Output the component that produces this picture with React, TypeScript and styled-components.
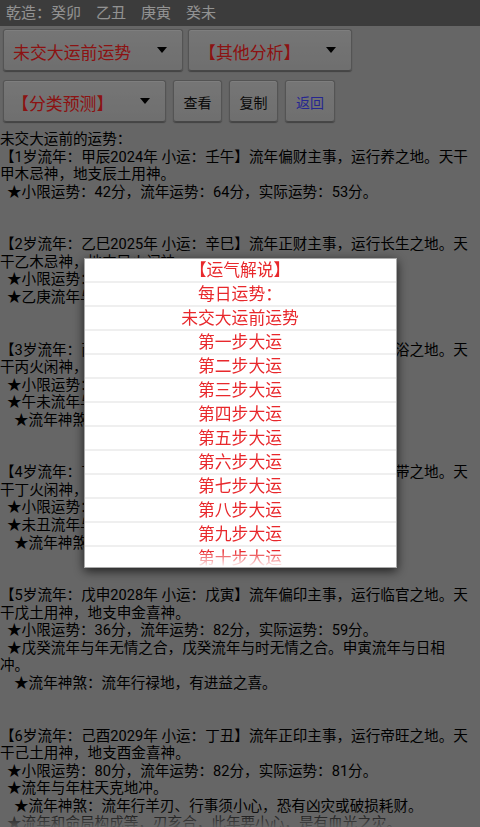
import React from 'react';
import styled, { createGlobalStyle } from 'styled-components';

const GlobalStyle = createGlobalStyle`
  html, body {
    margin: 0;
    padding: 0;
    background: #aaaaaa;
    overflow: hidden;
  }
  body {
    font-family: Roboto, 'Noto Sans CJK SC', sans-serif;
  }
`;

const Screen = styled.div`
  width: 480px;
  height: 827px;
  overflow: hidden;
  position: relative;
  background: #aaaaaa;
`;

const TopBar = styled.div`
  height: 26px;
  line-height: 27px;
  padding-left: 6px;
  background: #646464;
  color: #f4f4f4;
  font-size: 15px;
  white-space: pre;
`;

const ControlRow = styled.div<{ $gap: number; $top: number }>`
  display: flex;
  align-items: center;
  gap: ${p => p.$gap}px;
  padding-left: 3px;
  margin-top: ${p => p.$top}px;
`;

const RaisedBox = styled.div<{ $w: number }>`
  box-sizing: border-box;
  width: ${p => p.$w}px;
  height: 42px;
  border: 1px solid #8c8c8c;
  border-bottom-color: #777;
  border-radius: 3px;
  background: linear-gradient(#c4c4c4, #b9b9b9);
  box-shadow: 0 1px 1px rgba(0, 0, 0, 0.35), inset 0 1px 0 #d2d2d2;
`;

const Spinner = styled(RaisedBox)<{ $pad: number }>`
  display: flex;
  align-items: center;
  justify-content: space-between;
  padding: 2px 15px 0 ${p => p.$pad}px;
  color: #e82020;
  font-size: 16.9px;
  white-space: nowrap;
`;

const Arrow = styled.span`
  width: 0;
  height: 0;
  margin-top: -2px;
  border-left: 5.5px solid transparent;
  border-right: 5.5px solid transparent;
  border-top: 6px solid #000;
`;

const Button = styled(RaisedBox)<{ $blue?: boolean }>`
  display: flex;
  align-items: center;
  justify-content: center;
  padding-top: 1px;
  font-size: 14px;
  color: ${p => (p.$blue ? '#4040f0' : '#111')};
`;

const Content = styled.div`
  margin-top: 9px;
  position: relative;
  height: 700px;
  &::after {
    content: '';
    position: absolute;
    left: 0;
    right: 0;
    bottom: 0;
    height: 22px;
    background: linear-gradient(rgba(170, 170, 170, 0), #aaaaaa);
  }
`;

const TextLine = styled.div<{ $indent: number }>`
  height: 17.56px;
  line-height: 17.56px;
  font-size: 14.6px;
  color: #000;
  white-space: nowrap;
  padding-left: ${p => p.$indent}px;
`;

const Overlay = styled.div`
  position: fixed;
  inset: 0;
  background: rgba(0, 0, 0, 0.4);
  display: flex;
  align-items: center;
  justify-content: center;
`;

const Dialog = styled.div`
  box-sizing: border-box;
  width: 313px;
  height: 310px;
  margin-top: -1px;
  background: #fff;
  border: 1px solid #aaaaaa;
  box-shadow: 0 3px 10px rgba(0, 0, 0, 0.7);
  overflow: hidden;
  position: relative;
  &::after {
    content: '';
    position: absolute;
    left: 0;
    right: 0;
    bottom: 0;
    height: 16px;
    background: linear-gradient(rgba(255, 255, 255, 0), #fff);
  }
`;

const Item = styled.div`
  height: 22px;
  line-height: 23px;
  border-bottom: 2px solid #efefef;
  text-align: center;
  color: #e8282c;
  font-size: 16.8px;
`;

type Line = [string, number];

const S1 = 7;
const S2 = 14;

const lines: Line[] = [
  ['未交大运前的运势：', 0],
  ['【1岁流年：甲辰2024年 小运：壬午】流年偏财主事，运行养之地。天干', 0],
  ['甲木忌神，地支辰土用神。', 0],
  ['★小限运势：42分，流年运势：64分，实际运势：53分。', S1],
  ['', 0],
  ['', 0],
  ['【2岁流年：乙巳2025年 小运：辛巳】流年正财主事，运行长生之地。天', 0],
  ['干乙木忌神，地支巳火闲神。', 0],
  ['★小限运势：45分，流年运势：60分，实际运势：52分。', S1],
  ['★乙庚流年与日干相合。', S1],
  ['', 0],
  ['', 0],
  ['【3岁流年：丙午2026年 小运：庚辰】流年七杀主事，运行沐浴之地。天', 0],
  ['干丙火闲神，地支午火闲神。', 0],
  ['★小限运势：50分，流年运势：58分，实际运势：54分。', S1],
  ['★午未流年与时相合。', S1],
  ['★流年神煞：流年行桃花，主异性缘佳。', S2],
  ['', 0],
  ['', 0],
  ['【4岁流年：丁未2027年 小运：己卯】流年正官主事，运行冠带之地。天', 0],
  ['干丁火闲神，地支未土用神。', 0],
  ['★小限运势：40分，流年运势：72分，实际运势：56分。', S1],
  ['★未丑流年与月相冲。', S1],
  ['★流年神煞：流年行华盖，主孤独。', S2],
  ['', 0],
  ['', 0],
  ['【5岁流年：戊申2028年 小运：戊寅】流年偏印主事，运行临官之地。天', 0],
  ['干戊土用神，地支申金喜神。', 0],
  ['★小限运势：36分，流年运势：82分，实际运势：59分。', S1],
  ['★戊癸流年与年无情之合，戊癸流年与时无情之合。申寅流年与日相', S1],
  ['冲。', 0],
  ['★流年神煞：流年行禄地，有进益之喜。', S2],
  ['', 0],
  ['', 0],
  ['【6岁流年：己酉2029年 小运：丁丑】流年正印主事，运行帝旺之地。天', 0],
  ['干己土用神，地支酉金喜神。', 0],
  ['★小限运势：80分，流年运势：82分，实际运势：81分。', S1],
  ['★流年与年柱天克地冲。', S1],
  ['★流年神煞：流年行羊刃、行事须小心，恐有凶灾或破损耗财。', S2],
  ['★流年和命局构成等，刃亥合，此年要小心，是有血光之灾。', S1],
];

const menu = [
  '【运气解说】',
  '每日运势：',
  '未交大运前运势',
  '第一步大运',
  '第二步大运',
  '第三步大运',
  '第四步大运',
  '第五步大运',
  '第六步大运',
  '第七步大运',
  '第八步大运',
  '第九步大运',
  '第十步大运',
  '第十一步大运',
];

const App: React.FC = () => (
  <>
    <GlobalStyle />
    <Screen>
      <TopBar>乾造：癸卯　乙丑　庚寅　癸未</TopBar>
      <ControlRow $gap={5} $top={3}>
        <Spinner $w={180} $pad={9}>
          未交大运前运势
          <Arrow />
        </Spinner>
        <Spinner $w={164} $pad={10}>
          【其他分析】
          <Arrow />
        </Spinner>
      </ControlRow>
      <ControlRow $gap={7} $top={9}>
        <Spinner $w={163} $pad={8}>
          【分类预测】
          <Arrow />
        </Spinner>
        <Button $w={49}>查看</Button>
        <Button $w={49}>复制</Button>
        <Button $w={50} $blue>
          返回
        </Button>
      </ControlRow>
      <Content>
        {lines.map(([t, i], n) => (
          <TextLine key={n} $indent={i}>
            {t}
          </TextLine>
        ))}
      </Content>
      <Overlay>
        <Dialog>
          {menu.map(m => (
            <Item key={m}>{m}</Item>
          ))}
        </Dialog>
      </Overlay>
    </Screen>
  </>
);

export default App;
